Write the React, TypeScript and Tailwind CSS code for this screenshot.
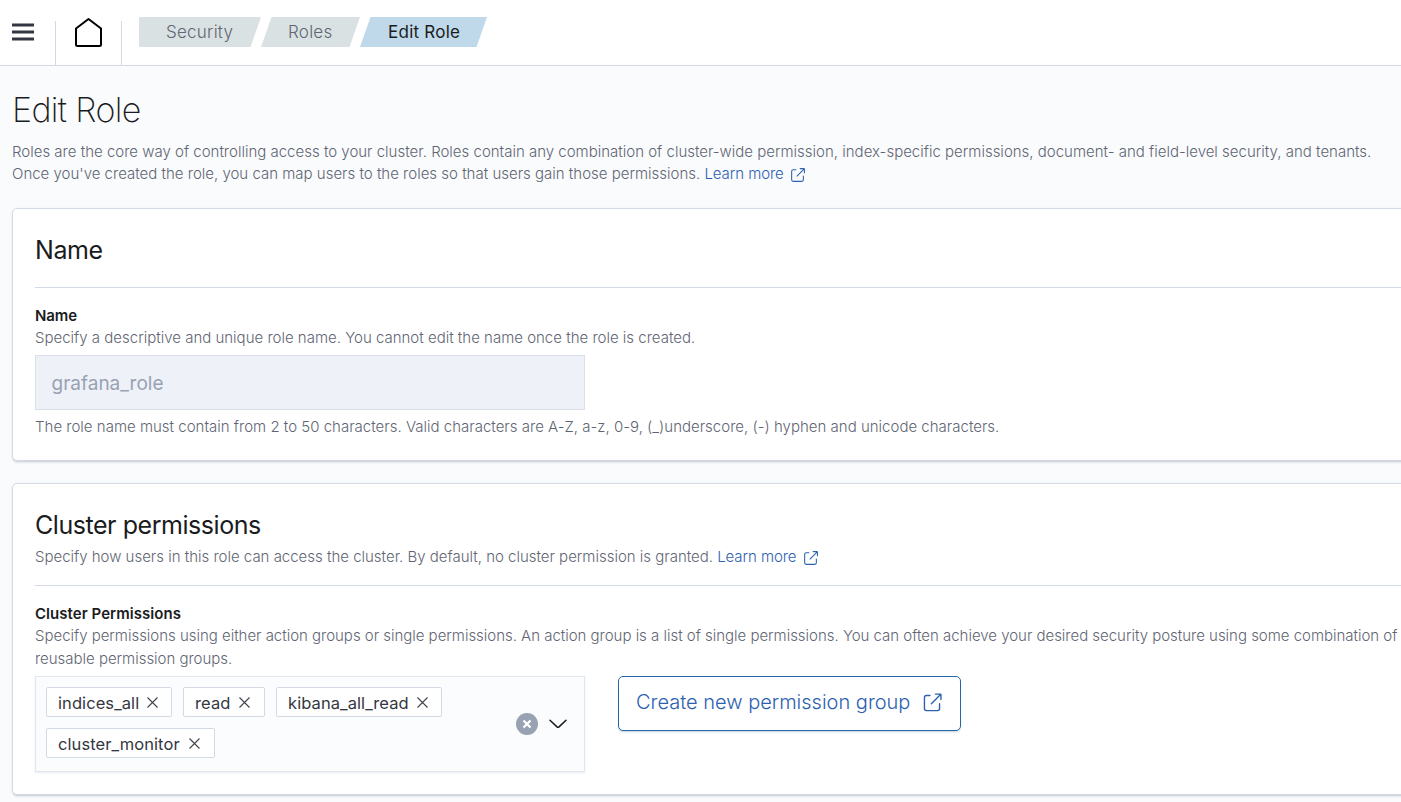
import React from "react";

function PopoutIcon({ className }: { className?: string }) {
  return (
    <svg className={className} viewBox="0 0 16 16" fill="currentColor">
      <path d="M13 8.5a.5.5 0 1 1 1 0V12a2 2 0 0 1-2 2H4a2 2 0 0 1-2-2V4a2 2 0 0 1 2-2h2.5a.5.5 0 0 1 0 1H4a1 1 0 0 0-1 1v8a1 1 0 0 0 1 1h8a1 1 0 0 0 1-1V8.5zm-5.12.339a.5.5 0 1 1-.706-.707L13.305 2H10.5a.5.5 0 1 1 0-1H14a1 1 0 0 1 1 1v3.5a.5.5 0 1 1-1 0V2.72L7.88 8.838z" />
    </svg>
  );
}

function CrossIcon() {
  return (
    <svg className="size-[11px] shrink-0" viewBox="0 0 11 11" fill="none" stroke="#40434c" strokeWidth="1.1">
      <path d="M.5.5l10 10M10.5.5l-10 10" />
    </svg>
  );
}

function Pill({ label, className }: { label: string; className: string }) {
  return (
    <div className={`flex h-[30px] items-center justify-between rounded-[2px] border border-[#d3dae6] bg-white pl-[11px] text-[16.5px] whitespace-nowrap text-[#343741] ${className}`}>
      <span className="pt-px tracking-[0.08px]">{label}</span>
      <CrossIcon />
    </div>
  );
}

function LearnMore() {
  return (
    <a className="text-[#2c61b0]">
      <span className="tracking-[-0.07px]">Learn more</span>
      <PopoutIcon className="relative top-px ml-[5.5px] inline size-[17px] align-middle mt-[-1px]" />
    </a>
  );
}

const crumbs = [
  { label: "Security", box: "w-[122px] pl-[27px] bg-[#d9e1e2] font-light text-[#5f6673] [clip-path:polygon(0_0,100%_0,calc(100%-10.5px)_100%,0_100%)]" },
  { label: "Roles", box: "w-[99px] pl-[27px] bg-[#d9e1e2] font-light text-[#5f6673] [clip-path:polygon(10.5px_0,100%_0,calc(100%-10.5px)_100%,0_100%)]" },
  { label: "Edit Role", box: "w-[127px] pl-[28px] bg-[#bfd8ea] text-[#1a1c21] [clip-path:polygon(10.5px_0,100%_0,calc(100%-10.5px)_100%,0_100%)]" },
];

export default function App() {
  return (
    <div className="h-[802px] w-[1401px] overflow-hidden bg-[#fafbfd] font-['Inter',sans-serif] text-[15px] leading-[22px] text-[#5f6673]">
      <header className="flex h-[66px] border-b border-[#d3dae6] bg-white">
        <div className="flex w-[56px] items-end border-r border-[#d3dae6] [border-image:linear-gradient(to_bottom,transparent_21px,#d3dae6_21px)_1]">
          <svg className="mb-[22px] ml-3 h-[22px] w-[22px]" viewBox="0 0 22 22" fill="#343741">
            <path d="M0 2.6h22v2.8H0zM0 9.6h22v2.8H0zM0 16.6h22v2.8H0z" />
          </svg>
        </div>
        <div className="flex w-[66px] border-r border-[#d3dae6] pt-[17px] pl-[18px] [border-image:linear-gradient(to_bottom,transparent_21px,#d3dae6_21px)_1]">
          <svg className="h-[31px] w-[28px]" viewBox="0 0 28 31" fill="none" stroke="#000" strokeWidth="2">
            <path d="M14.5 2L27 11.5V27.5q0 1.500-1.500 1.500H3.500q-1.500 0-1.500-1.500V11.500z" strokeLinejoin="round" />
          </svg>
        </div>
        <nav className="mt-[17px] ml-[17px] flex h-[30px] text-[17px] leading-[31px] tracking-[0.25px]">
          {crumbs.map((c) => (
            <div key={c.label} className={`h-[30px] ${c.box}`}>{c.label}</div>
          ))}
        </nav>
      </header>

      <main className="w-[1460px] pl-3 font-light">
        <h1 className="pt-[22px] text-[34px] leading-[44px] font-[250] tracking-[-0.65px] text-[#1a1c21]">Edit Role</h1>
        <p className="mt-[9px] whitespace-nowrap">
          Roles are the core way of controlling access to your cluster. Roles contain any combination of cluster-wide permission, index-specific permissions, document- and field-level security, and tenants.
          <br />
          Once you've created the role, you can map users to the roles so that users gain those permissions. <LearnMore />
        </p>

        <section className="mt-[23px] h-[253px] rounded-[5px] border border-[#d3dae6] bg-white pl-[22px] shadow-[0_2px_2px_-1px_rgba(152,162,179,0.45),0_1px_5px_-2px_rgba(152,162,179,0.4)]">
          <h2 className="pt-[24px] text-[25px] leading-[34px] font-normal tracking-[-0.45px] text-[#1a1c21]">Name</h2>
          <hr className="mt-5 border-[#d3dae6]" />
          <div className="mt-[17px] text-[15px] font-semibold tracking-[-0.1px] text-[#1a1c21]">Name</div>
          <p>Specify a descriptive and unique role name. You cannot edit the name once the role is created.</p>
          <div className="mt-[6px] h-[55px] w-[550px] border border-[#dadfea] bg-[#eef1f7] pl-[15.5px] text-[19px] leading-[55px] font-normal text-[#98a2b3]">grafana_role</div>
          <p className="mt-[6px] tracking-[0.008px]">The role name must contain from 2 to 50 characters. Valid characters are A-Z, a-z, 0-9, (_)underscore, (-) hyphen and unicode characters.</p>
        </section>

        <section className="mt-[22px] h-[312px] rounded-[5px] border border-[#d3dae6] bg-white pl-[22px] shadow-[0_2px_2px_-1px_rgba(152,162,179,0.45),0_1px_5px_-2px_rgba(152,162,179,0.4)]">
          <h2 className="pt-[24px] text-[25px] leading-[34px] font-normal tracking-[-0.45px] text-[#1a1c21]">Cluster permissions</h2>
          <p className="mt-[4px] tracking-[-0.008px]">Specify how users in this role can access the cluster. By default, no cluster permission is granted. <LearnMore /></p>
          <hr className="mt-[17px] border-[#d3dae6]" />
          <div className="mt-[17px] text-[15px] font-semibold tracking-[0.05px] text-[#1a1c21]">Cluster Permissions</div>
          <p className="mt-[-1px] leading-[23px] tracking-[-0.02px] whitespace-nowrap">
            Specify permissions using either action groups or single permissions. An action group is a list of single permissions. You can often achieve your desired security posture using some combination of
            <br />
            reusable permission groups.
          </p>
          <div className="mt-[6px] flex items-start gap-[33px]">
            <div className="flex h-[96px] w-[550px] items-center border border-[#e0e5ee] bg-[#fbfcfd] pl-[10px] font-normal shadow-[0_1px_2px_rgba(152,162,179,0.2)]">
              <div className="flex w-[470px] flex-wrap gap-x-[11px] gap-y-[11px] pb-[3px]">
                <Pill label="indices_all" className="w-[126px] pr-[13px]" />
                <Pill label="read" className="w-[82px] pr-[14px]" />
                <Pill label="kibana_all_read" className="w-[166px] pr-[13px]" />
                <Pill label="cluster_monitor" className="w-[169px] pr-[14px]" />
              </div>
              <svg className="size-[22px]" viewBox="0 0 22 22">
                <circle cx="11" cy="11" r="11" fill="#98a2b3" />
                <path d="M7.5 7.5l7 7M14.5 7.5l-7 7" stroke="#fff" strokeWidth="2.2" />
              </svg>
              <svg className="ml-[11px] h-[10px] w-[18px]" viewBox="0 0 18 10" fill="none" stroke="#1a1c21" strokeWidth="1.5" strokeLinecap="round" strokeLinejoin="round">
                <path d="M1 1.2l7 6.700q1 .8 2 0l7-6.700" />
              </svg>
            </div>
            <button className="flex h-[55px] w-[343px] items-center rounded-[5px] border border-[#2467b0] bg-white pl-[17px] text-[20px] text-[#2c61b0] shadow-[0_2px_2px_-1px_rgba(54,97,126,0.3)]">
              <span className="mt-[-3px] whitespace-nowrap">Create new permission group</span>
              <PopoutIcon className="mt-[-2px] ml-[11px] size-[22px]" />
            </button>
          </div>
        </section>
      </main>
    </div>
  );
}
